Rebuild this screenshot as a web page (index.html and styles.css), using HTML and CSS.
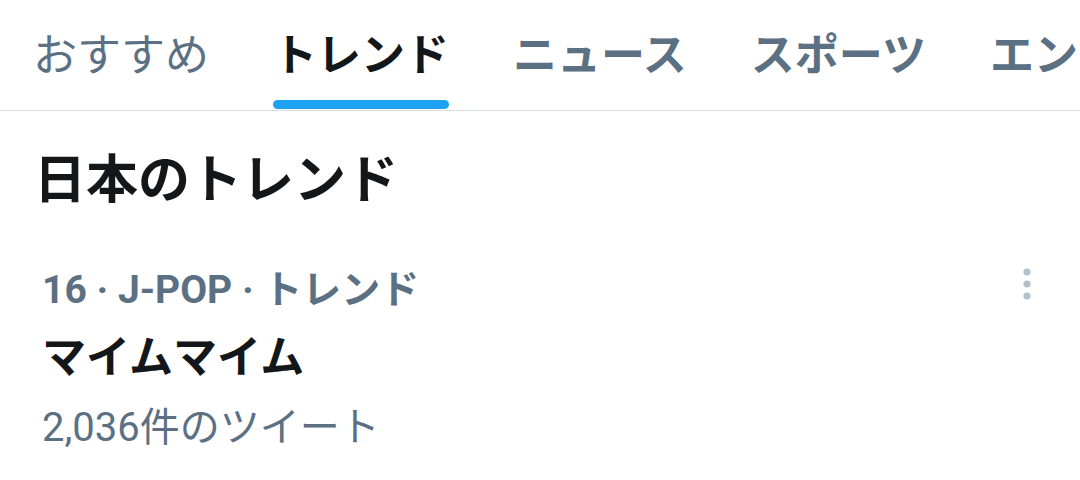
FILE: index.html
```html
<!DOCTYPE html>
<html lang="ja">

<head>
    <meta charset="UTF-8">
    <meta name="viewport" content="width=device-width, initial-scale=1.0">
    <title>日本のトレンド</title>
    <link rel="stylesheet" href="styles.css">
</head>

<body>

    <nav class="tabs">
        <a class="tab">おすすめ<span class="indicator"></span></a>
        <a class="tab active">トレンド<span class="indicator"></span></a>
        <a class="tab">ニュース<span class="indicator"></span></a>
        <a class="tab">スポーツ<span class="indicator"></span></a>
        <a class="tab">エンタメ<span class="indicator"></span></a>
    </nav>

    <section class="trends">
        <h2>日本のトレンド</h2>

        <div class="trend">
            <div class="trend-body">
                <p class="trend-meta">16 · J-POP · トレンド</p>
                <p class="trend-name">マイムマイム</p>
                <p class="trend-count">2,036件のツイート</p>
            </div>
            <svg class="more" width="10" height="32" viewBox="0 0 10 32">
                <circle cx="5" cy="4" r="3.6" />
                <circle cx="5" cy="16" r="3.6" />
                <circle cx="5" cy="28" r="3.6" />
            </svg>
        </div>
    </section>

</body>

</html>
```

FILE: styles.css
```css
* {
    margin: 0;
    padding: 0;
    box-sizing: border-box;
}

body {
    font-family: Roboto, 'Noto Sans CJK JP', sans-serif;
    background-color: #fff;
    color: #14171a;
    width: 1080px;
    height: 480px;
    overflow: hidden;
}

.tabs {
    display: flex;
    gap: 64px;
    padding-left: 33px;
    height: 111px;
    border-bottom: 1px solid #d6dde3;
    white-space: nowrap;
    overflow: hidden;
}

.tab {
    display: flex;
    flex-direction: column;
    align-items: stretch;
    flex-shrink: 0;
    padding-top: 32px;
    font-size: 44px;
    line-height: 48px;
    font-weight: 700;
    color: #5b7083;
}

.tab:first-child {
    font-weight: 400;
}

.tab.active {
    color: #14171a;
}

.indicator {
    margin-top: auto;
    margin-bottom: 1px;
    height: 9px;
    border-radius: 5px;
}

.tab.active .indicator {
    background-color: #1da1f2;
}

.trends {
    padding: 40px 36px 0 34px;
}

.trends h2 {
    font-size: 52px;
    line-height: 60px;
    font-weight: 700;
}

.trend {
    display: flex;
    justify-content: space-between;
    align-items: flex-start;
    margin-top: 57px;
    padding-left: 8px;
    padding-right: 12px;
}

.trend-meta {
    font-size: 39px;
    line-height: 44px;
    font-weight: 700;
    color: #5b7083;
}

.trend-name {
    margin-top: 21px;
    font-size: 44px;
    line-height: 50px;
    font-weight: 700;
}

.trend-count {
    margin-top: 23px;
    font-size: 40px;
    line-height: 44px;
    color: #5b7083;
}

.more {
    margin-top: 0;
    fill: #b4c0ca;
}
```
